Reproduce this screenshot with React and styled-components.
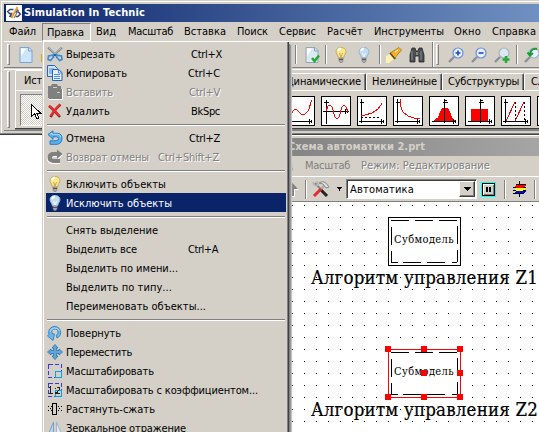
import React, { useLayoutEffect, useRef, useState } from 'react';
import styled, { createGlobalStyle, css } from 'styled-components';

const GlobalStyle = createGlobalStyle`
  * { box-sizing: border-box; }
  body { margin: 0; background: #fff; }
`;

const FACE = '#d4d0c8';
const DARK = '#808080';

const Screen = styled.div`
  position: relative;
  width: 539px;
  height: 432px;
  overflow: hidden;
  background: #fff;
  color: #000;
  font: 11px/14px "DejaVu Sans Condensed", "DejaVu Sans", sans-serif;
  cursor: default;
  white-space: nowrap;
`;

const Spacer = styled.div`
  flex: none;
  width: ${(p) => p.$w}px;
`;

const FitText = styled.span`
  display: inline-block;
  flex: none;
  white-space: pre;
`;

/* Spreads the letters so that the text is exactly w pixels long. */
function Fit({ w, children }) {
  const ref = useRef(null);
  const [spacing, setSpacing] = useState(0);
  useLayoutEffect(() => {
    const natural = ref.current.getBoundingClientRect().width;
    setSpacing((w - natural) / children.length);
  }, [w, children]);
  return (
    <FitText ref={ref} style={{ letterSpacing: spacing, width: spacing ? w : undefined }}>
      {children}
    </FitText>
  );
}

/* ---------- main window ---------- */

const MainWindow = styled.div`
  height: 135px;
  width: 560px;
  padding: 4px 0 0 4px;
  background: ${FACE};
  box-shadow: inset 0 -1px 0 #404040, inset 0 -2px 0 ${DARK}, inset 1px 1px 0 ${FACE}, inset 2px 2px 0 #fff;
`;

const TitleBar = styled.div`
  display: flex;
  align-items: center;
  height: 18px;
  padding-left: 2px;
  background: linear-gradient(90deg, #0a246a 0, #a6caf0 820px);
  color: #fff;
  font-weight: bold;
  gap: 2px;
`;

const MenuBar = styled.div`
  display: flex;
  height: 20px;
  align-items: center;
  padding: 1px 0 0 5px;
  border-bottom: 1px solid #fff;
`;

const MenuName = styled.div`
  display: flex;
  align-items: center;
  height: 18px;
  ${(p) => p.$open && css`
    padding: 2px 0 0 4px;
    width: 49px;
    border: 1px solid;
    border-color: ${DARK} #fff #fff ${DARK};
  `}
`;

const ToolRow = styled.div`
  display: flex;
  height: 26px;
  align-items: center;
  border-bottom: 1px solid ${DARK};
  svg { flex: none; }
`;

const Divider = styled.div`
  flex: none;
  width: 2px;
  height: ${(p) => p.$h || 19}px;
  border-left: 1px solid ${DARK};
  border-right: 1px solid #fff;
`;

const Grip = styled.div`
  flex: none;
  width: 3px;
  height: ${(p) => p.$h || 21}px;
  border: 1px solid;
  border-color: #fff ${DARK} ${DARK} #fff;
`;

const Palette = styled.div`
  display: flex;
  height: 62px;
  margin-top: 1px;
  padding: 1px 0 0 3px;
  border-top: 1px solid #fff;
  border-bottom: 1px solid ${DARK};
  gap: 5px;
`;

const Pages = styled.div`
  flex: 1;
  height: 58px;
  border-bottom: 1px solid #404040;
  box-shadow: 0 1px 0 ${DARK};
`;

const Tabs = styled.div`
  display: flex;
  align-items: flex-end;
  height: 20px;
  border-bottom: 1px solid #fff;
`;

const Tab = styled.div`
  flex: none;
  width: ${(p) => p.$w}px;
  height: ${(p) => (p.$active ? 20 : 17)}px;
  padding: ${(p) => (p.$active ? 3 : 1)}px 0 0 ${(p) => p.$pad}px;
  border: 1px solid #fff;
  border-bottom: 0;
  border-right: 1px solid #404040;
  border-radius: 2px 2px 0 0;
  box-shadow: inset -1px 0 0 ${DARK};
`;

const Blocks = styled.div`
  display: flex;
  height: 37px;
  padding: 3px 0 0 4px;
  border-left: 1px solid #fff;
`;

const SelectTool = styled.div`
  display: flex;
  flex: none;
  width: 33px;
  height: 32px;
  padding: 9px 0 0 10px;
  border: 1px solid;
  border-color: ${DARK} #fff #fff ${DARK};
  background: repeating-conic-gradient(#fff 0 25%, ${FACE} 0 50%) 0 0 / 2px 2px;
`;

const BlockList = styled.div`
  display: flex;
  gap: 6px;
  margin: 2px 0 0 232px;
`;

const BlockIcon = styled.svg`
  flex: none;
  width: 30px;
  height: 30px;
  background: #fff;
  border: 1px solid #000;
  fill: none;
  stroke: #000;
  shape-rendering: crispEdges;
`;

const Curve = styled.path`
  stroke: #f00;
  fill: ${(p) => (p.$solid ? '#f00' : 'none')};
`;

/* ---------- scheme window ---------- */

const SchemeWindow = styled.div`
  display: flex;
  flex-direction: column;
  margin-left: 280px;
  width: 280px;
  height: 297px;
  background: ${FACE};
  box-shadow: inset 0 1px 0 #fff;
  padding-top: 3px;
`;

const SchemeTitle = styled.div`
  display: flex;
  align-items: center;
  height: 18px;
  padding: 0 0 0 8px;
  color: ${FACE};
  font-weight: bold;
  background: linear-gradient(90deg, #838383, #a8a8a8);
`;

const SchemeMenu = styled.div`
  display: flex;
  align-items: center;
  height: 21px;
  color: ${DARK};
  border-bottom: 1px solid #fff;
`;

const Embossed = styled.span`
  color: ${DARK};
  text-shadow: 1px 1px 0 #fff;
`;

const SchemeTools = styled.div`
  display: flex;
  align-items: center;
  height: 25px;
  border-bottom: 1px solid ${DARK};
  svg { flex: none; }
`;

const Combo = styled.div`
  display: flex;
  justify-content: space-between;
  flex: none;
  width: 131px;
  height: 20px;
  padding: 1px 1px 1px 3px;
  background: #fff;
  border: 1px solid;
  border-color: ${DARK} #fff #fff ${DARK};
  box-shadow: inset 1px 1px 0 #404040;
  line-height: 17px;
`;

const ComboButton = styled.div`
  display: flex;
  align-items: center;
  justify-content: center;
  width: 16px;
  height: 16px;
  background: ${FACE};
  border: 1px solid;
  border-color: #fff #404040 #404040 #fff;
  box-shadow: inset -1px -1px 0 ${DARK};
`;

const PauseButton = styled.div`
  display: flex;
  align-items: center;
  justify-content: center;
  gap: 1px;
  flex: none;
  width: 15px;
  height: 15px;
  background: ${FACE};
  border: 1px solid #0ff;
  box-shadow: inset 0 0 0 1px #000, inset 2px 2px 0 #fff, inset -2px -2px 0 ${DARK};
`;

const Bar = styled.div`
  width: 2px;
  height: 5px;
  background: #000;
`;

const Canvas = styled.div`
  position: relative;
  flex: 1;
  background: conic-gradient(from 270deg at 1px 1px, #000 90deg, transparent 0) 0 3px / 12px 12px #fff;
`;

const Node = styled.div`
  position: absolute;
  left: 108px;
  top: ${(p) => p.$top}px;
  width: 73px;
  height: 49px;
  background: #fff;
  font: 11px/14px "DejaVu Serif Condensed", "DejaVu Serif", serif;
  svg { position: absolute; left: -3px; top: -3px; shape-rendering: crispEdges; }
`;

const NodeName = styled.div`
  padding: 16px 0 0 6px;
`;

const Caption = styled.div`
  position: absolute;
  left: 31px;
  top: ${(p) => p.$top}px;
  font: 18.5px/24px "DejaVu Serif Condensed", "DejaVu Serif", serif;
  -webkit-text-stroke: 0.2px #000;
`;

/* ---------- drop-down menu ---------- */

const Popup = styled.div`
  position: absolute;
  left: 42px;
  top: 41px;
  width: 247px;
  height: 400px;
  padding: 3px 2px 0 3px;
  background: ${FACE};
  border-left: 1px solid ${FACE};
  box-shadow: inset 1px 1px 0 #fff, inset -1px 0 0 #404040, inset -2px 0 0 ${DARK}, 1px 3px 0 #808080, 2px 4px 1px #999, 3px 5px 1px #ccc;
`;

const Item = styled.div`
  display: flex;
  align-items: center;
  height: 19px;
  padding-top: 2px;
  width: 240px;
  ${(p) => p.$disabled && css`
    color: ${DARK};
    text-shadow: 1px 1px 0 #fff;
  `}
  ${(p) => p.$hot && css`
    color: #fff;
    background: #0a246a;
  `}
`;

const ItemIcon = styled.div`
  display: flex;
  align-items: center;
  flex: none;
  width: 20px;
  padding: 0 0 1px 1px;
`;

const Shortcut = styled.div`
  padding-left: ${(p) => p.$gap}px;
`;

const Separator = styled.div`
  height: 8px;
  margin: 0 0 0 1px;
  width: 238px;
  padding-top: 4px;
  &::before {
    content: "";
    display: block;
    border-top: 1px solid ${DARK};
    border-bottom: 1px solid #fff;
  }
`;

/* ---------- icons ---------- */

const Svg16 = ({ children, ...rest }) => (
  <svg width="16" height="16" viewBox="0 0 16 16" fill="none" {...rest}>{children}</svg>
);

const Logo = () => (
  <svg width="16" height="16" viewBox="0 0 16 16" fill="none">
    <path fill="#fff" d="M0 0h16v16H0z" />
    <path d="M7.500 4.500H4L1.700 6.500 3.500 8.500h2L4 11.300h2.500M9.500 11.500h2.500l2.300-2.500-2-2h-2L12 4.500" stroke="#3c4468" strokeWidth="1.500" />
    <path d="M11.500 2 5.500 13" stroke="#e99b2d" strokeWidth="1.800" />
    <path d="M8 13 12.500 5" stroke="#7c8296" strokeWidth="1.200" />
  </svg>
);

const Scissors = () => (
  <Svg16>
    <path d="m1 1.500 9.500 9M15 1.500l-9.500 9" stroke="#7f8a8a" strokeWidth="2.200" />
    <path d="m1.500 1.500 9 8.500M14.500 1.500 6 9.500" stroke="#b5c0c2" />
    <path d="M6.500 9 1.500 10 1 13.500l2.500 1 3-3.500ZM9.500 9l5 1 .5 3.500-2.500 1-3-3.500Z" stroke="#3c8ad2" strokeWidth="1.600" />
    <path d="M7 8h2v2H7z" fill="#2060a8" />
  </Svg16>
);

const Copy = () => (
  <Svg16>
    <path d="M.5.500h7l3 3v8H.5z" fill="#cfe3fb" stroke="#2765bb" />
    <path d="M2 4h5M2 6h5M2 8h4" stroke="#4c8bd8" />
    <path d="M5.500 4.500h6l3.500 3v8H5.500z" fill="#e4f0ff" stroke="#2765bb" />
    <path d="M7 9.500h6M7 11.500h6M7 13.500h6M11.500 5v3H15" stroke="#4c8bd8" />
  </Svg16>
);

const Paste = () => (
  <Svg16>
    <path d="M1 2h3l1-2h5l1 2h3v3h1v10H2V14H1z" fill="#808080" />
    <path d="M6 3h4v1H6zM10 8h3v1h-3z" fill="#d4d0c8" />
    <path d="M2 15.500h13.500V5" stroke="#fff" />
  </Svg16>
);

const Delete = () => (
  <Svg16>
    <path d="M2 3q4 3 11 11M13.500 1.500Q8 6 3.500 14" stroke="#8e1b1b" strokeWidth="2.600" />
    <path d="M2 2.700q4 3 10.500 10.300M13 1.700Q8 6 3.500 13" stroke="#ec2d2d" strokeWidth="2" />
  </Svg16>
);

const Undo = () => (
  <Svg16>
    <path d="M1 4.500 6 .8v2.500h5q4.200.7 4 5.500-.4 5-5 5.500H3v-3.500h6q2.500-.2 2.500-2t-2-2H6v2.500Z" fill="#59b2ed" stroke="#2878c7" />
    <path d="m3 4.500 2-1.500v1.300h6q2.500.5 2.600 3" stroke="#a9dcfb" />
  </Svg16>
);

const Redo = () => (
  <Svg16>
    <path d="m16 6-6-5v3H5Q0 5 0 9.500 0 14.500 6 15h7v-4H7.500Q5 11 5 9.500T7.500 8H10v3.500Z" fill="#fff" />
    <path d="M15.500 5 10 .5V3H5Q.5 4 .5 8.500T6 14h7v-4H7Q5 10 5 8.500T7 7h3v3Z" fill="#808080" />
  </Svg16>
);

const Bulb = ({ blue }) => (
  <Svg16>
    <path d="M8 .5c5.500 0 6 5 3.500 7.500L10.500 11h-5L4.500 8C2 5.500 2.500.5 8 .5Z" fill={blue ? '#c3dcf2' : '#fbe88e'} stroke={blue ? '#93b6d4' : '#c7a958'} />
    <path d="M5 4q1-2.500 3-2.500" stroke="#fff" strokeWidth="2" />
    <path d="m6.500 6 1.500 4 1.500-4" stroke={blue ? '#fff' : '#b28b38'} strokeWidth=".7" />
    <path d="M6 11h4v3L9 15.500H7L6 14z" fill="#a9a9a9" stroke="#777" strokeWidth=".6" />
    <path d="M6 12.500h4" stroke="#555" />
  </Svg16>
);

const Rotate = () => (
  <Svg16>
    <path d="M2 9.500A6 6 0 1 1 10 13l-.7-3A3.200 3.200 0 1 0 5 8.500L7.500 9 6 15.500.5 11Z" fill="#70b7e9" stroke="#3884c0" />
    <path d="M3 7a5 5 0 0 1 9.500-1" stroke="#b4dff8" />
  </Svg16>
);

const Move = () => (
  <Svg16>
    <path d="m8 .5 3 3.500H9.500v2.500H12V5l3.500 3-3.500 3V9.500H9.500V12H11l-3 3.500L5 12h1.500V9.500H4V11L.5 8 4 5v1.500h2.500V4H5Z" fill="#5ba8df" stroke="#3070a8" strokeWidth=".8" />
  </Svg16>
);

const Scale = ({ ratio }) => (
  <Svg16 shapeRendering="crispEdges">
    <path d="M1.500 1.500h13v13h-13z" stroke="#4038c8" strokeDasharray="4 2" />
    <path d="M8.500 8.500h6v6h-6z" stroke="#00a4ef" />
    {ratio && <path d="m2 6 1.500-1.500V11M2 11h4M7.500 6h1M7.500 10h1M9.500 5h3v2.500l-3 3.500H13" stroke="#222" />}
  </Svg16>
);

const Stretch = () => (
  <Svg16 shapeRendering="crispEdges">
    <path d="M5.500 2.500h4v11h-4z" stroke="#000" />
    <path d="M1 5.500h4M1 9.500h4M11 5.500h4M11 9.500h4" stroke="#000" strokeDasharray="1 2" />
    <path d="M3 7.500h1M12 7.500h1" stroke="#000" />
  </Svg16>
);

const Mirror = () => (
  <Svg16>
    <path d="M6.500 2v12h-5Z" fill="#b9d4ec" stroke="#7e9fbe" />
    <path d="M9.500 2v12h5Z" fill="#e2edf6" stroke="#9fb5c9" />
  </Svg16>
);

const Sheet = ({ check }) => (
  <Svg16>
    <path d="M2 .5h9l3 3v12H2z" fill={check ? '#dceaf0' : '#cfe5fb'} stroke={check ? '#91a8b4' : '#79a5d6'} />
    <path d="M3 1.500h5L3 9z" fill="#fff" />
    <path d="M10.500.500v3.500H14" stroke="#79a5d6" />
    {check && <path d="m8 11 2.500 3L15 8.500" stroke="#1fa83c" strokeWidth="2.500" />}
  </Svg16>
);

const FolderEdge = () => (
  <svg width="2" height="16" viewBox="0 0 2 16"><path d="M0 7h2v8H0z" fill="#e0a020" /></svg>
);

const Torch = () => (
  <Svg16>
    <path d="m0 9 4-2 4 5-5 4H0z" fill="#fff6b0" opacity=".9" />
    <path d="m4 6 2-1 7-4.500L15.500 3 10 9.500 9 12Z" fill="#f6b226" stroke="#ad7410" strokeWidth=".8" />
    <path d="m4 6 5 6" stroke="#5d4a20" strokeWidth="1.500" />
    <path d="m9 5 3-2" stroke="#fff" />
  </Svg16>
);

const Binoculars = () => (
  <Svg16>
    <path d="M3 1h3l1 3h2l1-3h3l2 7v7h-5V9H6v6H1V8z" fill="#4a4e50" stroke="#25282a" strokeWidth=".8" />
    <path d="M3 4v9M12 4v9" stroke="#8a9092" />
    <path d="M7 5h2v3H7z" fill="#81878a" />
  </Svg16>
);

const Zoom = ({ kind }) => (
  <Svg16>
    <path d="m1 15 5-5" stroke="#8c8c94" strokeWidth="2.300" />
    <circle cx="10" cy="6" r="5" fill={kind === 'add' ? '#dce8ee' : '#e8f1ff'} stroke={kind === 'plus' || kind === 'minus' ? '#6b8ee0' : '#a5b5c0'} strokeWidth="1.200" />
    {kind === 'minus' && <path d="M7.500 6h5" stroke="#2144c8" strokeWidth="1.600" />}
    {kind === 'plus' && <path d="M7.500 6h5M10 3.500v5" stroke="#2144c8" strokeWidth="1.600" />}
    {kind === 'add' && <path d="M8.500 12.500h7M12 9v7" stroke="#25a83c" strokeWidth="2.500" />}
    {kind === 'back' && <path d="M13 2Q7 1 6 7M3.500 5.500 6 8.500l3-2.500" stroke="#1c9a35" strokeWidth="2" />}
  </Svg16>
);

const Cursor = () => (
  <svg width="11" height="17" viewBox="0 0 11 17" shapeRendering="crispEdges">
    <path d="M.5.500v12l3-3 2.500 5.500 2-1-2.500-5h4z" fill="#fff" stroke="#000" />
  </svg>
);

const Tools = () => (
  <svg width="18" height="18" viewBox="0 0 18 18" fill="none">
    <path d="m3 3 11 12" stroke="#858585" strokeWidth="2" />
    <path d="M1 2q1 5 5 3L5 1" stroke="#b5b5b5" strokeWidth="1.800" />
    <path d="m8 9 7 7" stroke="#242424" strokeWidth="3" />
    <path d="m13 5-4 4" stroke="#aaa" strokeWidth="2" />
    <path d="m9 9-7 7" stroke="#e02c2c" strokeWidth="3" />
    <path d="M7 3q4-3 7 0l3 4-3 1-3-4Z" fill="#dedede" stroke="#888" />
  </svg>
);

const Layers = () => (
  <svg width="15" height="16" viewBox="0 0 15 16" shapeRendering="crispEdges" fill="none">
    <path d="M4 10h10l-3 3H1z" fill="#00f" />
    <path d="M4 7h10l-3 3H1z" fill="#ff0" />
    <path d="M4 4h10l-3 3H1z" fill="#f00" />
    <path d="M7.500 0v4M7.500 13v3M4 3.500h10M11 6.500h3M11 9.500h3M1 6.500h3M1 9.500h3M1 12.500h10" stroke="#000" />
  </svg>
);

const Triangle = ({ w }) => (
  <svg width={w} height="4" viewBox="0 0 7 4" preserveAspectRatio="none" shapeRendering="crispEdges"><path d="M0 0h7L3.500 4z" /></svg>
);

const UpArrow = () => (
  <svg width="16" height="16" viewBox="0 0 16 16">
    <path d="M8.500 1.500 16 9h-4v7H5V9H1z" fill="#fff" />
    <path d="m8 .5 7 7.500h-4v7H5V8H1z" fill="#808080" />
  </svg>
);

/* ---------- block palette drawings ---------- */

const corner = <path d="M3.500 26V3M2 5.500h4M3.500 1.500v2M1 24.500h25M23.500 22v5M25.500 23v3" />;
const middle = <path d="M2 24.500h24M23.500 22v5M25.500 23v3M14.500 26V2M12.500 5.500h5M13.500 3.500h3" />;

const BLOCKS = [
  <>{corner}<Curve d="M3.500 18.500 8.500 12.500h2l5 5h3l4-4 3-10" /></>,
  <><path d="M4.500 27V3M2 5.500h5M1 14.500h26M23.500 12v5M25.500 13v3" /><Curve d="M4 14 6 9l2-1 2 2 3 10 2 2 2-2 3-10 2-2 2 2 2 5" /></>,
  <>{corner}<path d="M3 20.500h20" strokeDasharray="2 2" /><Curve d="M3 18h4l7-2 6-4 3-4V6" /></>,
  <>{corner}<Curve d="M6 2v6l3 7 5 4 6 2h6" /></>,
  <><Curve $solid d="M4 24l4-3 3-7 2-3h4l2 3 3 7 3 3z" />{middle}</>,
  <><Curve $solid d="M5.500 12.500h16v12h-16z" />{middle}</>,
  <>{corner}<path d="M13.500 5v20M22.500 5v20" strokeDasharray="2 2" /><Curve d="m4 24 9-19M13 24l9-19" /></>,
  <>{corner}</>,
];

/* ---------- data ---------- */

const MENU = [
  { t: 'Вырезать', w: 49, icon: <Scissors />, key: 'Ctrl+X', at: 191, kw: 31 },
  { t: 'Копировать', w: 61, icon: <Copy />, key: 'Ctrl+C', at: 188, kw: 32 },
  { t: 'Вставить', w: 47, icon: <Paste />, key: 'Ctrl+V', at: 189, kw: 31, disabled: true },
  { t: 'Удалить', w: 44, icon: <Delete />, key: 'BkSpc', at: 191, kw: 29 },
  null,
  { t: 'Отмена', w: 39, icon: <Undo />, key: 'Ctrl+Z', at: 189, kw: 31 },
  { t: 'Возврат отмены', w: 83, icon: <Redo />, key: 'Ctrl+Shift+Z', at: 158, kw: 61, disabled: true },
  null,
  { t: 'Включить объекты', w: 100, icon: <Bulb /> },
  { t: 'Исключить объекты', w: 106, icon: <Bulb blue />, hot: true },
  null,
  { t: 'Снять выделение', w: 92 },
  { t: 'Выделить все', w: 71, key: 'Ctrl+A', at: 188, kw: 30 },
  { t: 'Выделить по имени...', w: 112 },
  { t: 'Выделить по типу...', w: 106 },
  { t: 'Переименовать объекты...', w: 140 },
  null,
  { t: 'Повернуть', w: 55, icon: <Rotate /> },
  { t: 'Переместить', w: 66, icon: <Move /> },
  { t: 'Масштабировать', w: 88, icon: <Scale /> },
  { t: 'Масштабировать с коэффициентом...', w: 192, icon: <Scale ratio /> },
  { t: 'Растянуть-сжать', w: 89, icon: <Stretch /> },
  { t: 'Зеркальное отражение', w: 120, icon: <Mirror /> },
];

const TEXT_LEFT = 66;

function Submodel({ top, selected }) {
  const edge = selected ? '#f00' : '#000';
  const handles = [[0, 0], [36, 0], [72, 0], [72, 24], [36, 24], [72, 48], [36, 48], [0, 48]];
  return (
    <Node $top={top}>
      <NodeName><Fit w={60}>Субмодель</Fit></NodeName>
      <svg width="79" height="55" fill="none">
        <path d="M3.500 3.500h72v48h-72z" stroke={edge} />
        <path d="M6 6.500h18M30 6.500h18M54 6.500h18M72.500 12v18M72.500 36v12M72 48.500h-5M60 48.500H42M36 48.500H18M13 48.500H6M6.500 13v18M6.500 37v12" stroke="#000" />
        {selected && handles.map(([x, y]) => <rect key={`${x}-${y}`} x={x} y={y} width="6" height="6" fill="#f00" />)}
      </svg>
    </Node>
  );
}

export default function App() {
  return (
    <>
      <GlobalStyle />
      <Screen>
        <MainWindow>
          <TitleBar><Logo /><Fit w={121}>Simulation In Technic</Fit></TitleBar>
          <MenuBar>
            <MenuName><Fit w={27}>Файл</Fit></MenuName>
            <Spacer $w={6} />
            <MenuName $open><Fit w={37}>Правка</Fit></MenuName>
            <Spacer $w={5} />
            <MenuName><Fit w={20}>Вид</Fit></MenuName>
            <Spacer $w={12} />
            <MenuName><Fit w={45}>Масштаб</Fit></MenuName>
            <Spacer $w={11} />
            <MenuName><Fit w={42}>Вставка</Fit></MenuName>
            <Spacer $w={11} />
            <MenuName><Fit w={31}>Поиск</Fit></MenuName>
            <Spacer $w={11} />
            <MenuName><Fit w={37}>Сервис</Fit></MenuName>
            <Spacer $w={11} />
            <MenuName><Fit w={36}>Расчёт</Fit></MenuName>
            <Spacer $w={11} />
            <MenuName><Fit w={70}>Инструменты</Fit></MenuName>
            <Spacer $w={10} />
            <MenuName><Fit w={27}>Окно</Fit></MenuName>
            <Spacer $w={11} />
            <MenuName><Fit w={44}>Справка</Fit></MenuName>
          </MenuBar>
          <ToolRow>
            <Spacer $w={3} /><Grip />
            <Spacer $w={8} /><Sheet />
            <Spacer $w={7} /><FolderEdge />
            <Spacer $w={252} /><Divider />
            <Spacer $w={7} /><Sheet check />
            <Spacer $w={5} /><Divider />
            <Spacer $w={6} /><Bulb />
            <Spacer $w={7} /><Bulb blue />
            <Spacer $w={7} /><Divider />
            <Spacer $w={5} /><Torch />
            <Spacer $w={7} /><Binoculars />
            <Spacer $w={7} /><Divider $h={25} />
            <Spacer $w={2} /><Grip />
            <Spacer $w={9} /><Zoom kind="plus" />
            <Spacer $w={7} /><Zoom kind="minus" />
            <Spacer $w={7} /><Zoom kind="add" />
            <Spacer $w={6} /><Divider />
            <Spacer $w={6} /><Zoom kind="back" />
          </ToolRow>
          <Palette>
            <Grip $h={57} />
            <Pages>
              <Tabs>
                <Tab $w={80} $pad={8} $active><Fit w={18}>Ист</Fit></Tab>
                <Spacer $w={186} />
                <Tab $w={85} $pad={4}><Fit w={75}>Динамические</Fit></Tab>
                <Tab $w={76} $pad={5}><Fit w={65}>Нелинейные</Fit></Tab>
                <Tab $w={82} $pad={5}><Fit w={71}>Субструктуры</Fit></Tab>
                <Tab $w={70} $pad={6}><Fit w={8}>С.</Fit></Tab>
              </Tabs>
              <Blocks>
                <SelectTool><Cursor /></SelectTool>
                <BlockList>
                  {BLOCKS.map((b, i) => <BlockIcon key={i} viewBox="0 0 28 28">{b}</BlockIcon>)}
                </BlockList>
              </Blocks>
            </Pages>
          </Palette>
        </MainWindow>

        <SchemeWindow>
          <SchemeTitle><Fit w={137}>Схема автоматики 2.prt</Fit></SchemeTitle>
          <SchemeMenu>
            <Fit w={13}>ид</Fit>
            <Spacer $w={12} /><Fit w={45}>Масштаб</Fit>
            <Spacer $w={11} /><Embossed><Fit w={129}>Режим: Редактирование</Fit></Embossed>
          </SchemeMenu>
          <SchemeTools>
            <Spacer $w={3} /><UpArrow />
            <Spacer $w={6} /><Divider />
            <Spacer $w={5} /><Tools />
            <Spacer $w={7} /><Triangle w={5} />
            <Spacer $w={4} /><Combo><Fit w={64}>Автоматика</Fit><ComboButton><Triangle w={7} /></ComboButton></Combo>
            <Spacer $w={4} /><PauseButton><Bar /><Bar /></PauseButton>
            <Spacer $w={8} /><Divider />
            <Spacer $w={6} /><Layers />
            <Spacer $w={7} /><Divider />
          </SchemeTools>
          <Canvas>
            <Submodel top={15} />
            <Caption $top={64}><Fit w={227}>Алгоритм управления Z1</Fit></Caption>
            <Submodel top={147} selected />
            <Caption $top={196}><Fit w={227}>Алгоритм управления Z2</Fit></Caption>
          </Canvas>
        </SchemeWindow>

        <Popup>
          {MENU.map((m, i) => (m ? (
            <Item key={i} $disabled={m.disabled} $hot={m.hot}>
              <ItemIcon>{m.icon}</ItemIcon>
              <Fit w={m.w}>{m.t}</Fit>
              {m.key && <Shortcut $gap={m.at - TEXT_LEFT - m.w}><Fit w={m.kw}>{m.key}</Fit></Shortcut>}
            </Item>
          ) : <Separator key={i} />))}
        </Popup>
      </Screen>
    </>
  );
}
